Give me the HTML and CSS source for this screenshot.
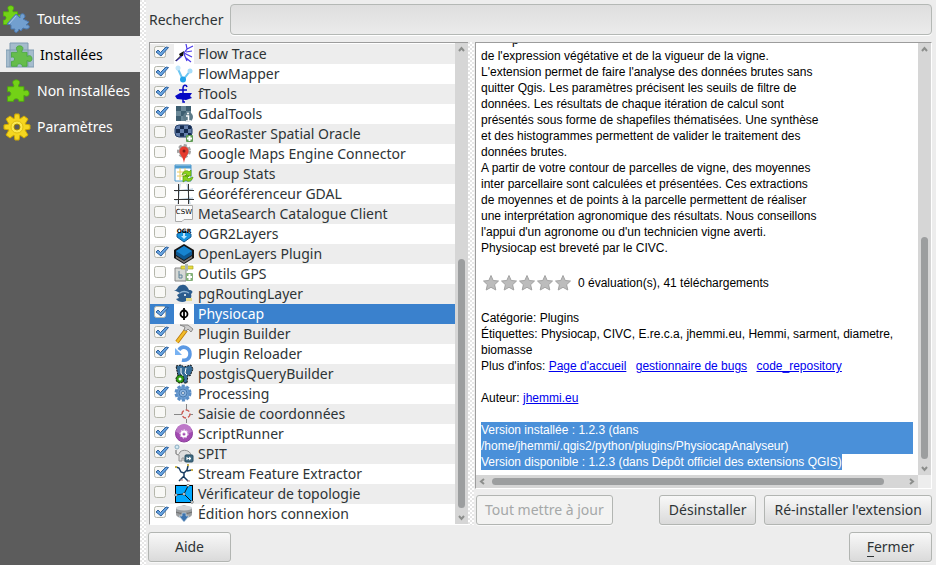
FILE: index.html
```html
<!DOCTYPE html>
<html lang="fr">
<head>
<meta charset="utf-8">
<title>Extensions</title>
<link rel="stylesheet" href="styles.css">
</head>
<body>
<svg class="defs" aria-hidden="true">
  <defs>
    <path id="puzzle" d="M3 9H10C11 7 9 6 9 4C9 0 17 0 17 4C17 6 15 7 16 9H22V14C25 12 28 13 28 17C28 20 25 21 22 19V26H16C17 22 9 22 10 26H3V20C8 21 8 13 3 15Z"/>
    <path id="star" d="M9 1.500L11.200 6.500L16.500 7L12.600 10.700L13.800 16L9 13.300L4.200 16L5.400 10.700L1.500 7L6.800 6.500Z" fill="#bcbcbc" stroke="#a2a2a2"/>
  </defs>
</svg>
<div class="window">
  <nav class="sidebar">
    <a class="tab" href="#toutes">
      <svg class="tab-icon" viewBox="0 0 28 28"><use href="#puzzle" fill="#73d216" stroke="#4cae08" transform="translate(-2 0) scale(.75)"/><path d="M4 19L13 9L17 13C16 8 22 7 22 12L20 14L26 17L23 20C27 19 28 24 23 24L20 23L18 26L16 24C15 29 10 28 12 24L8 24L8 20Z" fill="#729fcf" stroke="#4a78b0"/><path d="M6 19L13 11" stroke="#a9c6e6"/></svg>
      <span>Toutes</span></a>
    <a class="tab selected" href="#installees" aria-current="page">
      <svg class="tab-icon" viewBox="0 0 28 28"><path d="M4 2H22V26H4ZM0 9H28V26H0Z" fill="#a5bccd"/><path d="M4 26V2H22V26M0 9H28V26H0Z" fill="none" stroke="#7f9bb1"/><use href="#puzzle" fill="#66bd4b" stroke="#46a53c" transform="translate(3 4) scale(.82)"/></svg>
      <span>Installées</span></a>
    <a class="tab" href="#non-installees">
      <svg class="tab-icon" viewBox="0 0 28 28"><use href="#puzzle" fill="#73d216" stroke="#4cae08" transform="translate(2 2) scale(.86)"/></svg>
      <span>Non installées</span></a>
    <a class="tab" href="#parametres">
      <svg class="tab-icon" viewBox="0 0 28 28"><path d="M12 1H16L17 6L21 3L25 6L22 11L27 12V16L22 17L25 22L21 25L17 22L16 27H12L11 22L7 25L3 22L6 17L1 16V12L6 11L3 6L7 3L11 6Z" fill="#f5d620" stroke="#d0aa00"/><circle cx="14" cy="14" r="6" fill="#fce94f" stroke="#e0be10"/><circle cx="14" cy="14" r="3" fill="#5c5c5c" stroke="#aa8c00"/></svg>
      <span>Paramètres</span></a>
  </nav>
  <div class="splitter"></div>
  <main class="main">
    <div class="search">
      <label for="search">Rechercher</label>
      <input type="text" id="search">
    </div>
    <div class="panes">
      <section class="list-pane">
        <div class="plugins">
          <label class="plugin"><input type="checkbox" checked><svg viewBox="0 0 20 20"><rect width="20" height="20" fill="#fff"/><path d="M2 17L8 12M12 0L13 5L10 9L18 13M13 5L19 2M12 8L18 7M10 10L13 17M12 14L17 18" fill="none" stroke="#4a3ae8" stroke-width="1.200"/><path d="M1 17L6 12L5 10L10 7L9 12L7 12L2 17Z" fill="#111"/></svg><span>Flow Trace</span></label>
          <label class="plugin"><input type="checkbox" checked><svg viewBox="0 0 20 20"><path d="M4 5L9 16L16 7" fill="none" stroke="#6cc6f2" stroke-width="2"/><circle cx="4" cy="4" r="2.500" fill="#c2e6fa"/><circle cx="16" cy="7" r="2.500" fill="#a6dcf8"/><circle cx="9" cy="15.500" r="3" fill="#22a5ea"/></svg><span>FlowMapper</span></label>
          <label class="plugin"><input type="checkbox" checked><svg viewBox="0 0 20 20"><path d="M1 12L6 9L18 9L16 12L18 14L12 16L3 15Z" fill="#0608c4"/><path d="M13 3C12 0 9 1 9 4V18H11M5 6H13" fill="none" stroke="#0608c4" stroke-width="1.500"/></svg><span>fTools</span></label>
          <label class="plugin"><input type="checkbox" checked><svg viewBox="0 0 20 20"><path d="M2 2H17V17H2Z" fill="#3d5e70"/><path d="M7 2H12V7H7ZM2 7H7V12H2ZM12 7H17V12H12ZM7 12H12V17H7Z" fill="#6b8998"/><circle cx="14" cy="13" r="5" fill="#5d7b89"/><path d="M12 12H14.500V17M12 17H17" fill="none" stroke="#fff" stroke-width="1.500"/><circle cx="14" cy="9.500" r="1" fill="#fff"/></svg><span>GdalTools</span></label>
          <label class="plugin"><input type="checkbox"><svg viewBox="0 0 20 20"><rect x="1" y="1" width="17" height="12" rx="4" fill="#6580ad" stroke="#223c66"/><path d="M6 1.500H10V5H6ZM14 2H17V5H14ZM2 5H6V9H2ZM10 5H14V9H10ZM6 9H10V12.500H6ZM14 9H17V12H14Z" fill="#152b50"/><rect x="12" y="11" width="7" height="7" rx="1" fill="#5f9c55"/><path d="M15.500 12V17M13 14.500H18" stroke="#fff" stroke-width="2"/></svg><span>GeoRaster Spatial Oracle</span></label>
          <label class="plugin"><input type="checkbox"><svg viewBox="0 0 20 20"><circle cx="10" cy="7" r="5.500" fill="#aaa" stroke="#a2a2a2" stroke-width="3" stroke-dasharray="3 2"/><path d="M10 19C9 12 5.500 11 5.500 7A4.500 4.500 0 0 1 14.500 7C14.500 11 11 12 10 19Z" fill="#e53b2e"/><circle cx="10" cy="7" r="1.500" fill="#7e1c18"/></svg><span>Google Maps Engine Connector</span></label>
          <label class="plugin"><input type="checkbox"><svg viewBox="0 0 20 20"><path d="M1 1H17V17H1Z" fill="#fff" stroke="#4c9ace"/><path d="M1 3H17" stroke="#4c9ace" stroke-width="3"/><path d="M3 8H15M3 12H15M6 4V16M11 4V16" stroke="#eacb62"/><path d="M8 11C9 6 14 6 15 8L17 6V12H11L13 10C11 9 10 10 8 11ZM19 13C18 18 13 18 12 16L9 18V12H15L13 14C15 15 17 14 19 13Z" fill="#8bd31b" stroke="#4e9a06" stroke-width=".7"/></svg><span>Group Stats</span></label>
          <label class="plugin"><input type="checkbox"><svg viewBox="0 0 20 20"><path d="M6 0L4 20M13 0L16 20M1 7L19 5M1 16L19 14" stroke="#a6bfd4"/><path d="M4.500 0V20M14.500 0V20M0 6.500H20M0 15.500H20" stroke="#333"/></svg><span>Géoréférenceur GDAL</span></label>
          <label class="plugin"><input type="checkbox"><svg viewBox="0 0 20 20"><path d="M1.500 1.500H18.500V15.500H10L8 17.500H1.500Z" fill="#fafafa" stroke="#aaa"/><text x="10" y="10" class="csw">CSW</text></svg><span>MetaSearch Catalogue Client</span></label>
          <label class="plugin"><input type="checkbox"><svg viewBox="0 0 20 20"><path d="M3 10L10 7L17 10V13L10 18L3 13Z" fill="#1794df" stroke="#145a91"/><path d="M9 9H11V12H13L10 15L7 12H9Z" fill="#bde8ff"/><text x="10" y="9" class="ogr">OGR</text></svg><span>OGR2Layers</span></label>
          <label class="plugin"><input type="checkbox" checked><svg viewBox="0 0 20 20"><path d="M0 6L10 0L20 6V14L10 20L0 14Z" fill="#151515"/><path d="M2 12L10 17L18 12V14L10 19L2 14Z" fill="#777"/><path d="M2 7L10 2L18 7V11L10 16L2 11Z" fill="#0d5791"/><path d="M2 7L10 2L18 7L10 12Z" fill="#1684d0"/></svg><span>OpenLayers Plugin</span></label>
          <label class="plugin"><input type="checkbox"><svg viewBox="0 0 20 20"><path d="M1 4H12V17H1Z" fill="#d6d9d6" stroke="#888"/><path d="M7 2H19V5H7Z" fill="#e7dc3c" stroke="#aba32a" stroke-width=".7"/><path d="M11 0H14V7H11Z" fill="#aab6b4"/><path d="M5 7V14H8V11H5" fill="none" stroke="#5e8299"/><rect x="12" y="9" width="7" height="8" rx="1" fill="#84b179"/><path d="M15.500 10V16M13 13H18" stroke="#fff" stroke-width="2"/></svg><span>Outils GPS</span></label>
          <label class="plugin"><input type="checkbox"><svg viewBox="0 0 20 20"><path d="M0 6C4 7 3 1 8 1C12 0 14 4 15 6C18 6 20 8 17 10C18 13 17 16 12 17C9 19 4 18 2 15L5 14L3 11L6 9Z" fill="#2b5c8d"/><path d="M6 9C8 7 12 7 15 9" fill="none" stroke="#8cb1d2" stroke-width="1.500"/><circle cx="11" cy="11" r="1" fill="#fff"/><path d="M12 14H18V17H12Z" fill="#e4d98c"/></svg><span>pgRoutingLayer</span></label>
          <label class="plugin current"><input type="checkbox" checked><svg viewBox="0 0 20 20"><rect width="20" height="20" fill="#fff"/><circle cx="10" cy="10" r="3.500" fill="none" stroke="#000" stroke-width="1.800"/><path d="M10 4V16" stroke="#000" stroke-width="1.800"/></svg><span>Physiocap</span></label>
          <label class="plugin"><input type="checkbox" checked><svg viewBox="0 0 20 20"><path d="M12 6L3 18" stroke="#b97708" stroke-width="4"/><path d="M12 6L3 18" stroke="#f2bd2a" stroke-width="2.500"/><path d="M6 1L14 1L19 5L17 8L14 5L12 7L10 6L11 3Z" fill="#ccc" stroke="#777" stroke-width=".8"/></svg><span>Plugin Builder</span></label>
          <label class="plugin"><input type="checkbox" checked><svg viewBox="0 0 20 20"><path d="M5 6C8 1 16 3 16 10C16 15 12 17 8 16" fill="none" stroke="#5b99e4" stroke-width="3.500"/><path d="M1 4V11H8Z" fill="#78b2f2"/></svg><span>Plugin Reloader</span></label>
          <label class="plugin"><input type="checkbox"><svg viewBox="0 0 20 20"><path d="M2 2L7 1L10 3L17 1L19 5L16 12L14 11L13 19H10L8 12L4 12Z" fill="#356c98" stroke="#111" stroke-dasharray="2 1"/><path d="M7 4V9L9 12M12 4L11 9L13 11" fill="none" stroke="#fff"/><circle cx="6" cy="15" r="4" fill="#2c9c10" stroke="#111" stroke-dasharray="2 1"/><circle cx="6" cy="15" r="1.500" fill="#fff"/></svg><span>postgisQueryBuilder</span></label>
          <label class="plugin"><input type="checkbox" checked><svg viewBox="0 0 20 20"><circle cx="9" cy="9" r="7" fill="#6c9ed3" stroke="#5b8ec6" stroke-width="3" stroke-dasharray="3 1.500"/><circle cx="9" cy="9" r="4" fill="#86b0de" stroke="#4b7bae"/><circle cx="9" cy="9" r="1.500" fill="#eee" stroke="#4b7bae"/></svg><span>Processing</span></label>
          <label class="plugin"><input type="checkbox"><svg viewBox="0 0 20 20"><path d="M0 10.500H8M16 10.500H19M12.500 0V6M12.500 15V19" stroke="#888"/><circle cx="12" cy="10" r="4" fill="none" stroke="#cc5e57" stroke-width="1.500" stroke-dasharray="4 2"/></svg><span>Saisie de coordonnées</span></label>
          <label class="plugin"><input type="checkbox" checked><svg viewBox="0 0 20 20"><circle cx="10" cy="9.500" r="8.500" fill="#a34ab2" stroke="#8b3c9b"/><path d="M2 8A8 8 0 0 1 18 8Q10 12 2 8Z" fill="#bd78c8"/><circle cx="10" cy="10" r="2.500" fill="none" stroke="#fff" stroke-width="2"/><circle cx="10" cy="10" r="4" fill="none" stroke="#fff" stroke-dasharray="1.500 1.500"/></svg><span>ScriptRunner</span></label>
          <label class="plugin"><input type="checkbox" checked><svg viewBox="0 0 20 20"><circle cx="3" cy="3" r="2" fill="#d4eaf5" stroke="#8aadc1"/><path d="M2 6V9C3 12 5 11 6 8C9 5 16 6 17 11H12V17H10V14H8V17H5V11L2 10Z" fill="#ddd" stroke="#929292"/><rect x="11" y="11" width="8" height="7" rx="1" fill="#426d84" stroke="#294e63"/><path d="M13 13V16M13 14.500H17M15 13L17 14.500L15 16" fill="none" stroke="#fff"/></svg><span>SPIT</span></label>
          <label class="plugin"><input type="checkbox" checked><svg viewBox="0 0 20 20"><path d="M2 3L5 4L7 8L10 9M14 2L13 6L10 9V13L14 17M10 12L5 17M13 7L18 6" fill="none" stroke="#183b60" stroke-width="1.500"/><path d="M1 3H3M13 1H15M17 6H19" stroke="#c8b24a" stroke-width="2"/><path d="M6 16H9M13 17H16" stroke="#ad7474"/></svg><span>Stream Feature Extractor</span></label>
          <label class="plugin"><input type="checkbox"><svg viewBox="0 0 20 20"><rect x="1.500" y="1.500" width="17" height="17" fill="#00a8ff" stroke="#000"/><path d="M1 11L10 10L14 2M10 10L18 18" fill="none" stroke="#111"/><g fill="#fff" stroke="#222" stroke-width=".5"><circle cx="2" cy="11" r="1.300"/><circle cx="10" cy="10" r="1.300"/><circle cx="14" cy="1.500" r="1.300"/><circle cx="18" cy="18" r="1.300"/></g></svg><span>Vérificateur de topologie</span></label>
          <label class="plugin"><input type="checkbox" checked><svg viewBox="0 0 20 20"><path d="M2 4L10 1L18 4V10C18 13 14 14 10 14C6 14 2 13 2 10Z" fill="#9a9ea1"/><ellipse cx="10" cy="4" rx="8" ry="2.500" fill="#d4d6d8"/><path d="M2 8C6 10 14 10 18 8" fill="none" stroke="#666"/><path d="M8 9H12V12H15L10 18L5 12H8Z" fill="#3c73ae" stroke="#c3d2df" stroke-width=".7"/></svg><span>Édition hors connexion</span></label>
        </div>
        <div class="scroll vertical">
          <svg viewBox="0 0 13 13"><path d="M4 8L6.500 5L9 8" /></svg>
          <div class="track"><div class="thumb"></div></div>
          <svg viewBox="0 0 13 13"><path d="M4 5L6.500 8L9 5" /></svg>
        </div>
      </section>
      <div class="splitter"></div>
      <section class="detail-pane">
        <div class="browser">
          <article class="description">
            <div class="text">
              <p><span class="lead">p</span><br>
              de l'expression végétative et de la vigueur de la vigne.<br>
              L'extension permet de faire l'analyse des données brutes sans<br>
              quitter Qgis. Les paramètres précisent les seuils de filtre de<br>
              données. Les résultats de chaque itération de calcul sont<br>
              présentés sous forme de shapefiles thématisées. Une synthèse<br>
              et des histogrammes permettent de valider le traitement des<br>
              données brutes.<br>
              A partir de votre contour de parcelles de vigne, des moyennes<br>
              inter parcellaire sont calculées et présentées. Ces extractions<br>
              de moyennes et de points à la parcelle permettent de réaliser<br>
              une interprétation agronomique des résultats. Nous conseillons<br>
              l'appui d'un agronome ou d'un technicien vigne averti.<br>
              Physiocap est breveté par le CIVC.</p>
              <div class="rating">
                <svg class="stars" viewBox="0 0 90 18"><use href="#star"/><use href="#star" x="18"/><use href="#star" x="36"/><use href="#star" x="54"/><use href="#star" x="72"/></svg>
                <span>0 évaluation(s), 41 téléchargements</span>
              </div>
              <p>Catégorie: Plugins<br>
              Étiquettes: Physiocap, CIVC, E.re.c.a, jhemmi.eu, Hemmi, sarment, diametre,<br>
              biomasse<br>
              Plus d'infos: <a href="#accueil">Page d'accueil</a> <a class="next" href="#bugs">gestionnaire de bugs</a> <a class="next" href="#code">code_repository</a></p>
              <p class="gap">Auteur: <a href="#auteur">jhemmi.eu</a></p>
              <p class="gap highlight"><span class="full">Version installée : 1.2.3 (dans<br>/home/jhemmi/.qgis2/python/plugins/PhysiocapAnalyseur)</span><span>Version disponible : 1.2.3 (dans Dépôt officiel des extensions QGIS)</span></p>
            </div>
          </article>
          <div class="scroll vertical">
            <svg viewBox="0 0 13 13"><path d="M4 8L6.500 5L9 8" /></svg>
            <div class="track"><div class="thumb"></div></div>
            <svg viewBox="0 0 13 13"><path d="M4 5L6.500 8L9 5" /></svg>
          </div>
          <div class="scroll horizontal">
            <svg viewBox="0 0 13 13"><path d="M8 4L5 6.500L8 9" /></svg>
            <div class="track"><div class="thumb"></div></div>
            <svg viewBox="0 0 13 13"><path d="M5 4L8 6.500L5 9" /></svg>
          </div>
        </div>
        <div class="actions">
          <button type="button" class="first" disabled>Tout mettre à jour</button>
          <button type="button">Désinstaller</button>
          <button type="button">Ré-installer l'extension</button>
        </div>
      </section>
    </div>
    <footer class="footer">
      <button type="button" class="wide">Aide</button>
      <button type="button" class="wide"><span class="key">F</span>ermer</button>
    </footer>
  </main>
</div>
</body>
</html>
```
FILE: styles.css
```css
* { box-sizing: border-box; }

body {
  margin: 0;
  background: #ededed;
  color: #2e3436;
  font: 14px/20px "Noto Sans", "Open Sans", sans-serif;
}

.defs { position: absolute; width: 0; height: 0; }

.window { display: flex; min-height: 100vh; }

.sidebar { flex: 0 0 140px; background: #5c5c5c; }

.tab {
  display: flex;
  align-items: center;
  gap: 6px;
  height: 36px;
  padding: 2px 0 0 3px;
  color: #fff;
  text-decoration: none;
  white-space: nowrap;
}
.tab.selected { padding-left: 6px; background: #ededed; color: #000; }
.tab-icon { width: 28px; height: 28px; }

.splitter {
  flex: 0 0 6px;
  background: repeating-conic-gradient(#fff 0 25%, #e6e6e6 0 50%) 0 0 / 4px 4px;
}

.main {
  flex: 1;
  min-width: 0;
  display: flex;
  flex-direction: column;
  padding: 4px 4px 4px 2px;
}

.search { display: flex; align-items: center; gap: 7px; padding-left: 1px; }
.search input {
  flex: 1;
  min-width: 0;
  height: 31px;
  border: 1px solid #b4b8b5;
  border-radius: 4px;
  background: linear-gradient(#dedede, #ebebeb);
  box-shadow: 0 1px #fff;
  font: inherit;
}

.panes { flex: 1; display: flex; margin-top: 7px; min-height: 0; padding-left: 1px; }

.list-pane {
  flex: 0 0 319px;
  display: flex;
  border: 1px solid #9c9c9c;
  border-right: 0;
  border-bottom-color: #fff;
  background: #fff;
}
.plugins { flex: 1; min-width: 0; padding-top: 1px; }

.plugin { display: flex; align-items: center; height: 20px; padding-left: 4px; white-space: nowrap; }
.plugin:nth-child(odd) { background: #ededed; }
.plugin.current { background: #3a81cd; color: #fff; }
.plugin svg { width: 20px; height: 20px; margin: 0 4px; }
.plugin input {
  appearance: none;
  width: 16px;
  height: 16px;
  margin: 0 0 2px;
  background: url("data:image/svg+xml,%3Csvg xmlns='http://www.w3.org/2000/svg' viewBox='0 0 16 16'%3E%3Crect x='.5' y='1.500' width='11' height='11' rx='2' fill='%23f8f8f6' stroke='%23b4b6ab'/%3E%3C/svg%3E");
}
.plugin input:checked {
  background: url("data:image/svg+xml,%3Csvg xmlns='http://www.w3.org/2000/svg' viewBox='0 0 16 16'%3E%3Crect x='.5' y='1.500' width='11' height='11' rx='2' fill='%23f8f8f6' stroke='%23b4b6ab'/%3E%3Cpath d='M2 7L4 5L6.500 7.500L12 2L14.500 2.500L7 11Z' fill='%2367a3de' stroke='%232d609f'/%3E%3C/svg%3E");
}

.csw { font: 7px "DejaVu Sans", sans-serif; text-anchor: middle; }
.ogr { font: bold 6px "DejaVu Sans", sans-serif; text-anchor: middle; }

.scroll { display: flex; background: #d6d6d6; }
.scroll svg { flex: none; width: 13px; height: 13px; fill: none; stroke: #8c8e8c; stroke-width: 2; }
.scroll.vertical { flex-direction: column; width: 13px; }
.track { flex: 1; display: flex; min-width: 0; min-height: 0; }
.thumb { border-radius: 4px; background: #9c9e9f; }
.vertical .track { flex-direction: column; justify-content: flex-end; align-items: center; padding-bottom: 3px; }
.vertical .thumb { width: 7px; height: 55%; }
.horizontal .track { align-items: center; padding-left: 3px; }
.horizontal .thumb { width: 95%; height: 7px; }

.detail-pane { flex: 1; min-width: 0; display: flex; flex-direction: column; padding-left: 1px; }

.browser {
  flex: 1;
  display: grid;
  grid-template: minmax(0, 1fr) 13px / minmax(0, 1fr) 13px;
  border: 1px solid #9c9c9c;
  border-right-color: #fff;
  border-bottom-color: #fff;
}
.description {
  contain: size;
  display: flex;
  flex-direction: column;
  justify-content: flex-end;
  overflow: hidden;
  padding: 0 5px;
  background: #fff;
  color: #000;
  font: 12px/16px "Liberation Sans", sans-serif;
  white-space: nowrap;
}
.text { padding-bottom: 5px; }
.text p { margin: 0; }
.text a { color: #00e; }
.text .next { margin-left: 6px; }
.text .gap { margin-top: 16px; }
.lead { padding-left: 31px; }
.rating { display: flex; align-items: center; gap: 6px; height: 54px; padding-left: 1px; }
.stars { width: 90px; height: 18px; }
.highlight { color: #fff; }
.highlight span { display: inline-block; background: #4a90d9; }
.highlight .full { display: block; }

.actions { display: flex; gap: 8px; margin-top: 6px; padding-left: 1px; }
.actions .first { margin-right: auto; }

button {
  height: 30px;
  padding: 0 8px;
  border: 1px solid #b2b5b2;
  border-radius: 3px;
  background: linear-gradient(#f8f8f8, #dadada);
  box-shadow: 0 1px #f8f8f8;
  color: #2e3436;
  font: inherit;
  white-space: nowrap;
}
.actions button { padding: 0 9px; }
.actions button:disabled { padding: 0 8px; background: #f3f3f2; color: #a5a8a8; }
.footer .wide { width: 83px; }
.key { border-bottom: 1px solid #2e3436; }

.footer { display: flex; justify-content: space-between; margin-top: 7px; }
```
